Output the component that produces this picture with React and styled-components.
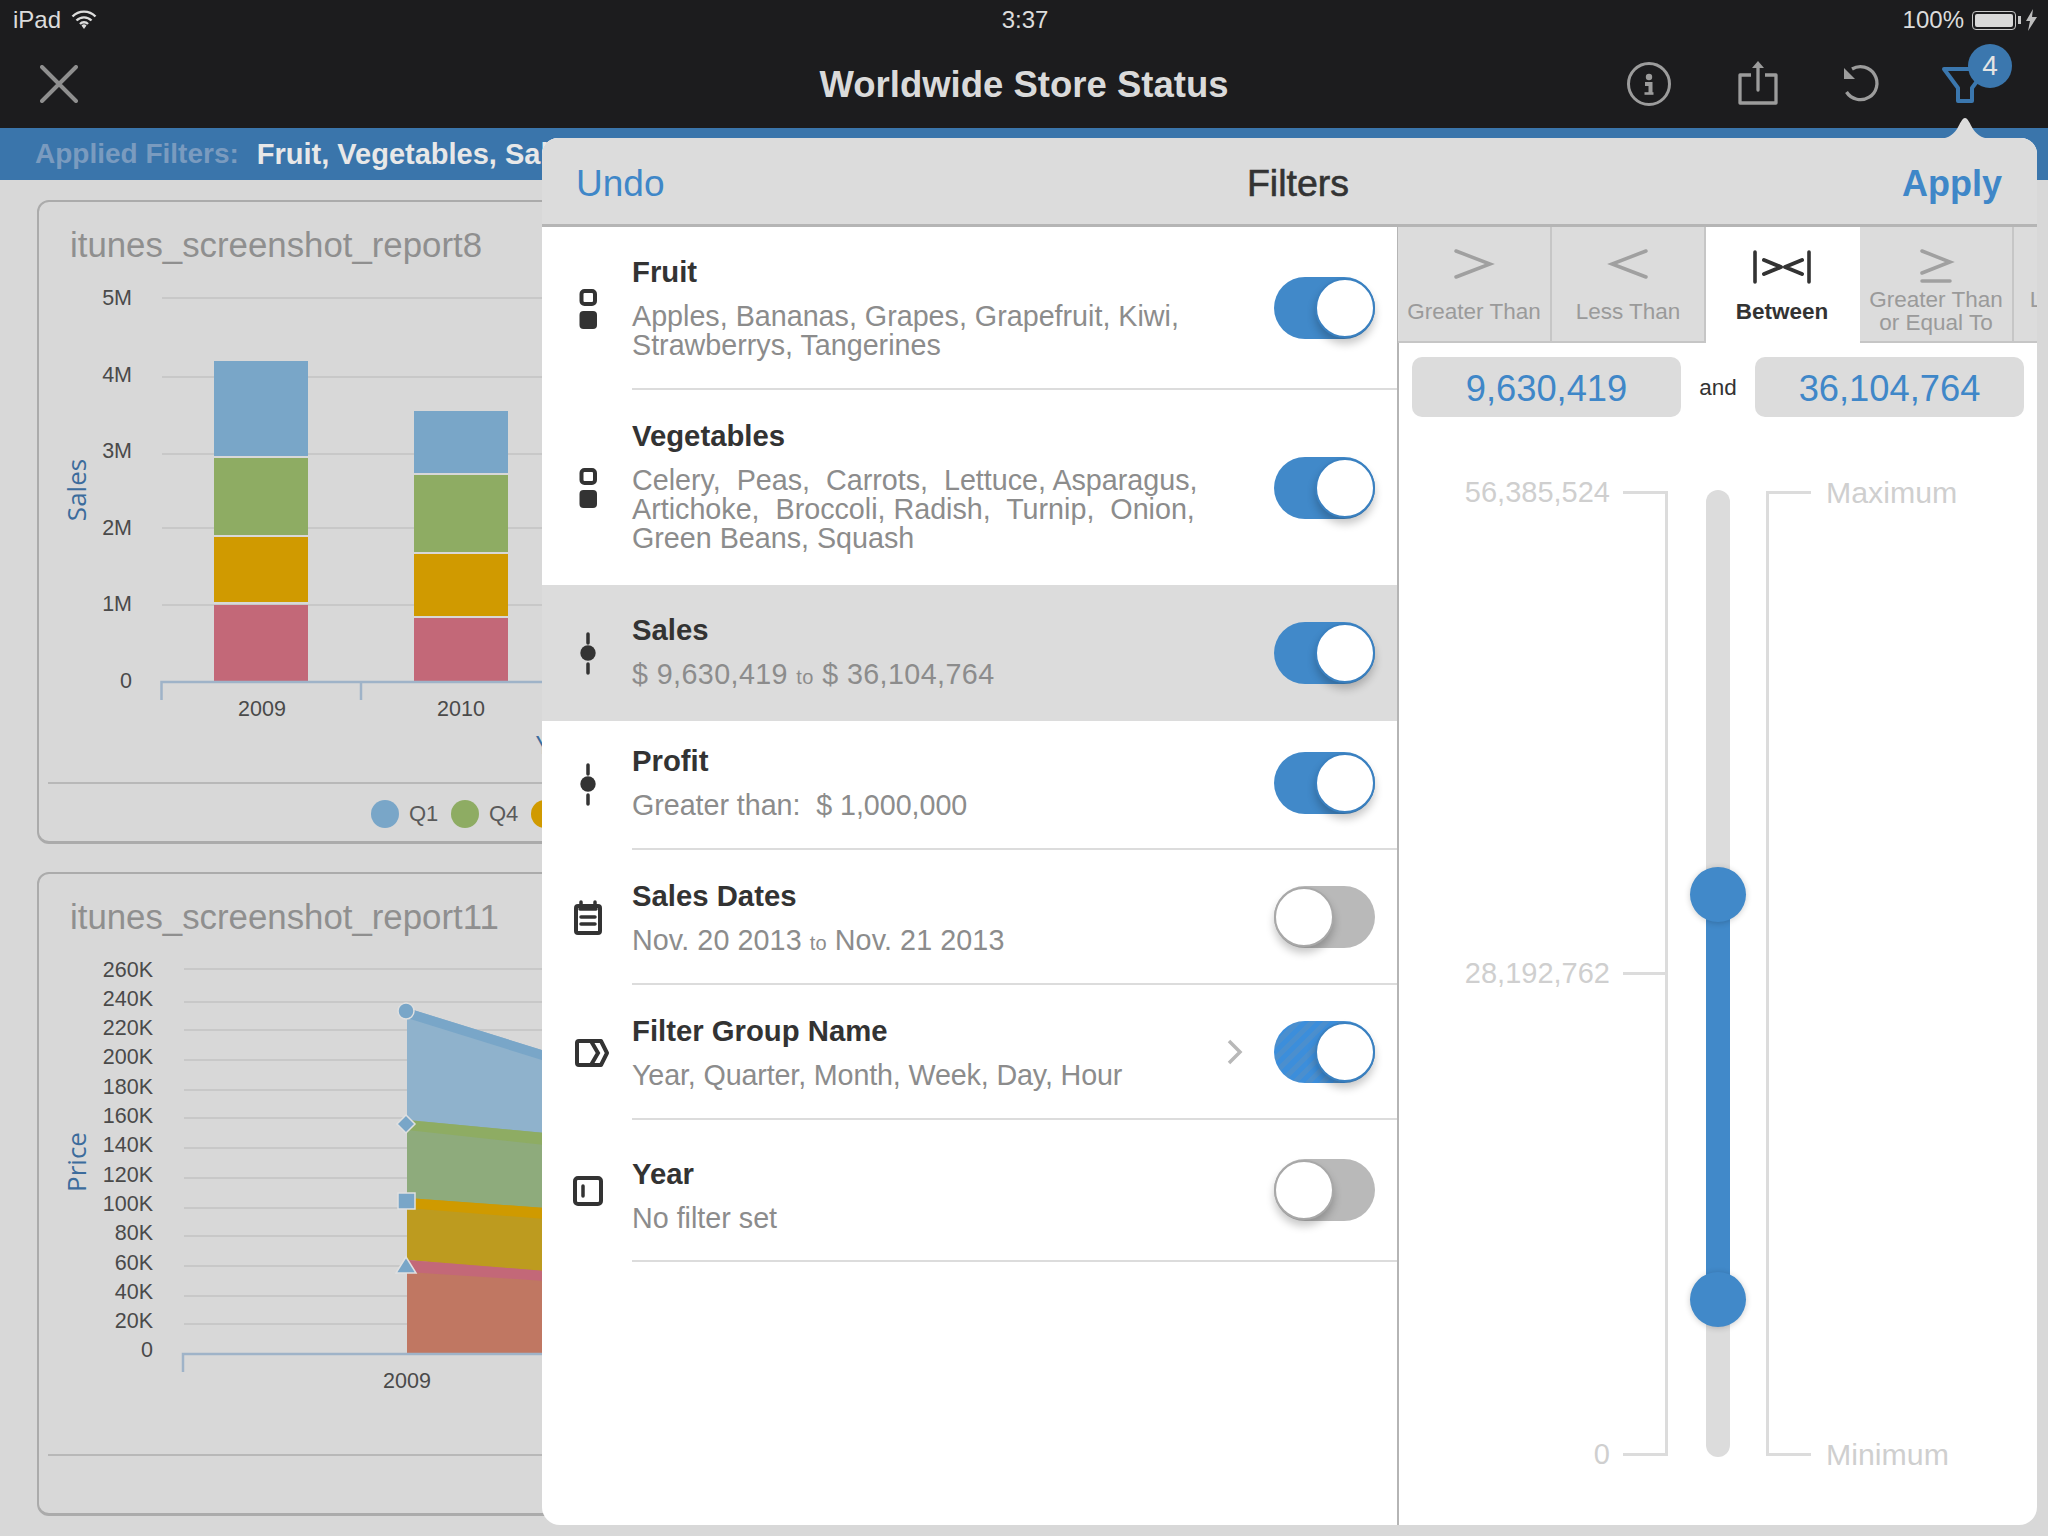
import React from 'react'
import styled, { createGlobalStyle } from 'styled-components'

const ICON_GREY = '#9c9c9c'
const INK = '#333333'

const GlobalStyle = createGlobalStyle`
  html, body { margin: 0; padding: 0; background: #d8d8d8; }
  * { box-sizing: border-box; }
  body { font-family: "Liberation Sans", Arial, sans-serif; }
`

const Screen = styled.div`
  position: relative;
  width: 2048px;
  height: 1536px;
  overflow: hidden;
  background: #d8d8d8;
`
const StatusBar = styled.div`
  display: grid;
  grid-template-columns: 1fr auto 1fr;
  align-items: center;
  height: 40px;
  padding: 0 11px 0 13px;
  background: #1c1c1e;
  color: #dcdcdc;
  font-size: 24px;
`
const StatusLeft = styled.div`
  display: flex;
  align-items: center;
  gap: 10px;
`
const StatusRight = styled.div`
  display: flex;
  align-items: center;
  justify-content: flex-end;
  gap: 8px;
`
const Battery = styled.div`
  position: relative;
  width: 44px;
  height: 19px;
  margin-right: 2px;
  padding: 2px;
  border: 1.5px solid #c8c8c8;
  border-radius: 4px;
  &::after {
    content: '';
    position: absolute;
    right: -6px;
    top: 4px;
    width: 3px;
    height: 8px;
    background: #c8c8c8;
  }
`
const BatteryFill = styled.div`
  height: 100%;
  background: #d8d8d8;
  border-radius: 2px;
`
const NavBar = styled.div`
  display: grid;
  grid-template-columns: 1fr auto 1fr;
  align-items: center;
  height: 88px;
  padding: 0 40px;
  background: #1c1c1e;
`
const NavTitle = styled.div`
  color: #dadada;
  font-size: 36.5px;
  font-weight: 700;
  padding-top: 2px;
`
const NavIcons = styled.div`
  display: flex;
  align-items: center;
  justify-content: flex-end;
  gap: 64px;
  padding-right: 17px;
  svg { display: block; }
`
const InfoIcon = styled.svg`
  margin-right: 3px;
`
const ShareIcon = styled.svg`
  margin-right: 1px;
`
const FunnelWrap = styled.div`
  position: relative;
  margin-left: -4px;
`
const Badge = styled.div`
  position: absolute;
  left: 27px;
  top: -18px;
  width: 44px;
  height: 44px;
  border-radius: 50%;
  background: #3b77ae;
  color: #e4e4e4;
  font-size: 28px;
  line-height: 44px;
  text-align: center;
`
const FilterBar = styled.div`
  display: flex;
  align-items: center;
  gap: 18px;
  height: 52px;
  padding-left: 35px;
  background: #3a75ab;
  font-size: 29px;
  font-weight: 700;
  white-space: nowrap;
`
const FilterLabel = styled.span`
  color: #7a9bbf;
  font-size: 28px;
`
const FilterValue = styled.span`
  color: #e8e8e8;
`
const Content = styled.div`
  display: flex;
  flex-direction: column;
  gap: 28px;
  padding: 20px 38px 0 37px;
`
const Card = styled.div`
  height: 644px;
  border: 2px solid #ababab;
  border-bottom-width: 3px;
  border-radius: 12px;
  overflow: hidden;
`
const CardTitle = styled.div`
  margin: 22px 0 0 31px;
  height: 42px;
  line-height: 42px;
  font-size: 34.8px;
  color: #8f8f8f;
`
const ChartSvg = styled.svg`
  display: block;
`
const AxisText = styled.text`
  font-family: "Liberation Sans", Arial, sans-serif;
  font-size: 21.5px;
  fill: #4a4a4a;
`
const AxisTitle = styled.text`
  font-family: "Open Sans", sans-serif;
  font-size: 26px;
  fill: #3c6c9c;
`
const CardRule = styled.div`
  height: 2px;
  margin-left: 9px;
  background: #b8b8b8;
`
const Legend = styled.div`
  display: flex;
  align-items: center;
  height: 57px;
  padding: 3px 0 0 332px;
`
const LegendDot = styled.div`
  width: 28px;
  height: 28px;
  margin-right: 10px;
  border-radius: 50%;
  background: ${p => p.$color};
`
const LegendText = styled.span`
  width: 42px;
  font-size: 22px;
  color: #5a5a5a;
`
const Popover = styled.div`
  position: absolute;
  left: 542px;
  top: 138px;
  width: 1495px;
  height: 1387px;
  display: flex;
  flex-direction: column;
  background: #fff;
  border-radius: 16px 16px 18px 18px;
`
const PopoverArrow = styled.svg`
  position: absolute;
  left: 1393px;
  top: -21px;
`
const PopoverHeader = styled.div`
  display: grid;
  grid-template-columns: 1fr auto 1fr;
  align-items: center;
  height: 89px;
  padding: 5px 35px 0 34px;
  background: #dcdcdc;
  border-bottom: 3px solid #b5b5b5;
  border-radius: 16px 16px 0 0;
`
const HeaderLink = styled.div`
  color: #3f87c8;
  font-size: ${p => (p.$bold ? 36 : 37)}px;
  font-weight: ${p => (p.$bold ? 700 : 400)};
  text-align: ${p => (p.$bold ? 'right' : 'left')};
`
const HeaderTitle = styled.div`
  padding-left: 18px;
  color: #333;
  font-size: 37.5px;
  -webkit-text-stroke: 0.6px #333;
`
const PopoverBody = styled.div`
  display: flex;
  flex: 1;
  min-height: 0;
`
const FilterList = styled.div`
  width: 857px;
  flex-shrink: 0;
  border-right: 2px solid #b5b5b5;
`
const Row = styled.div`
  display: flex;
  align-items: stretch;
  height: ${p => p.$height}px;
  background: ${p => (p.$selected ? '#dcdcdc' : 'transparent')};
`
const IconCell = styled.div`
  display: flex;
  align-items: center;
  justify-content: center;
  width: 90px;
  flex-shrink: 0;
  padding-left: 2px;
  padding-bottom: ${p => p.$nudge || 0}px;
  svg { display: block; }
`
const RowBody = styled.div`
  display: flex;
  align-items: center;
  flex: 1;
  padding-right: 22px;
  padding-bottom: ${p => p.$nudge || 0}px;
  border-bottom: ${p => (p.$divider ? '2px solid #dcdcdc' : 'none')};
`
const RowText = styled.div`
  flex: 1;
  min-width: 0;
  padding-top: ${p => (p.$shift > 0 ? p.$shift * 2 : 0)}px;
  padding-bottom: ${p => (p.$shift < 0 ? -p.$shift * 2 : 0)}px;
`
const RowTitle = styled.div`
  height: 36px;
  line-height: 36px;
  margin-bottom: 12px;
  color: ${INK};
  font-size: 29.3px;
  font-weight: 700;
`
const RowSub = styled.div`
  color: #8c8c8c;
  font-size: 28.7px;
  line-height: 29px;
  letter-spacing: ${p => p.$tracking || 0}px;
  white-space: pre-wrap;
`
const Small = styled.span`
  font-size: 20px;
`
const Chevron = styled.svg`
  margin-right: 30px;
`
const Toggle = styled.div`
  position: relative;
  width: 101px;
  height: 62px;
  flex-shrink: 0;
  border-radius: 31px;
  background: ${p => (p.$striped
    ? 'repeating-linear-gradient(-45deg, #3c8edb 0 5px, #4b8fce 5px 10px)'
    : p.$on ? '#4189c9' : '#b9b9b9')};
`
const Knob = styled.div`
  position: absolute;
  top: 1px;
  left: ${p => (p.$on ? '41px' : '0')};
  width: 60px;
  height: 60px;
  border-radius: 50%;
  background: #fff;
  border: 2px solid ${p => (p.$on ? '#3a80c0' : '#a8a8a8')};
  box-shadow: 0 6px 8px rgba(0, 0, 0, 0.22);
`
const Editor = styled.div`
  flex: 1;
  min-width: 0;
  display: flex;
  flex-direction: column;
`
const Tabs = styled.div`
  display: flex;
  height: 116px;
  flex-shrink: 0;
  margin-left: -1px;
  overflow: hidden;
`
const Tab = styled.div`
  width: 154px;
  flex-shrink: 0;
  display: flex;
  flex-direction: column;
  align-items: center;
  gap: 4px;
  padding-top: 19px;
  padding-right: ${p => (p.$last ? '16px' : '0')};
  background: ${p => (p.$active ? '#fff' : '#dcdcdc')};
  border-right: 2px solid ${p => (p.$active ? '#fff' : '#c6c6c6')};
  border-bottom: 2px solid ${p => (p.$active ? '#fff' : '#c6c6c6')};
`
const TabLabel = styled.div`
  display: flex;
  align-items: center;
  height: 46px;
  color: ${p => (p.$active ? INK : '#9a9a9a')};
  font-size: 22.5px;
  font-weight: ${p => (p.$active ? 700 : 400)};
  line-height: 23px;
  text-align: center;
  white-space: pre-line;
`
const Inputs = styled.div`
  display: grid;
  grid-template-columns: 269px 74px 269px;
  align-items: center;
  padding: 14px 0 0 13px;
`
const ValueBox = styled.div`
  height: 60px;
  border-radius: 10px;
  background: #dcdcdc;
  color: #3f87c8;
  font-size: 36.3px;
  line-height: 63px;
  text-align: center;
`
const AndLabel = styled.div`
  padding-top: 2px;
  color: ${INK};
  font-size: 22.5px;
  text-align: center;
`
const Slider = styled.div`
  display: flex;
  height: 967px;
  margin-top: 73px;
`
const LeftScale = styled.div`
  display: flex;
  flex-direction: column;
  justify-content: space-between;
  width: 269px;
  height: 965px;
  margin: 1px 38px 0 0;
  border-right: 3px solid #dcdcdc;
`
const ScaleRow = styled.div`
  display: flex;
  align-items: center;
  justify-content: flex-end;
  height: 3px;
`
const ScaleText = styled.span`
  margin-right: 13px;
  color: #cfcfcf;
  font-size: 29px;
`
const Tick = styled.div`
  width: 42px;
  height: 3px;
  flex-shrink: 0;
  background: #dcdcdc;
`
const Track = styled.div`
  position: relative;
  width: 24px;
  flex-shrink: 0;
  border-radius: 12px;
  background: #dcdcdc;
`
const TrackRange = styled.div`
  position: absolute;
  left: 0;
  top: ${p => p.$top}px;
  width: 24px;
  height: ${p => p.$height}px;
  background: #4189c9;
`
const Thumb = styled.div`
  position: absolute;
  left: -16px;
  top: ${p => p.$top}px;
  width: 56px;
  height: 55px;
  border-radius: 50%;
  background: #4189c9;
  box-shadow: 0 1px 6px rgba(0, 0, 0, 0.2);
`
const RightScale = styled.div`
  display: flex;
  flex-direction: column;
  justify-content: space-between;
  height: 965px;
  margin: 1px 0 0 36px;
  border-left: 3px solid #dcdcdc;
`
const RightRow = styled(ScaleRow)`
  justify-content: flex-start;
`
const RightText = styled.span`
  margin-left: 15px;
  color: #cfcfcf;
  font-size: 30.3px;
`

const filters = [
  { name: 'Fruit', icon: 'list', height: 163, divider: true, shift: -1, lines: 'Apples, Bananas, Grapes, Grapefruit, Kiwi,\nStrawberrys, Tangerines', on: true },
  { name: 'Vegetables', icon: 'list', height: 195, shift: -2, lines: 'Celery,  Peas,  Carrots,  Lettuce, Asparagus,\nArtichoke,  Broccoli, Radish,  Turnip,  Onion,\nGreen Beans, Squash', on: true },
  { name: 'Sales', icon: 'range', height: 136, selected: true, shift: -1, tracking: 0.4, lines: <>$ 9,630,419 <Small>to</Small> $ 36,104,764</>, on: true },
  { name: 'Profit', icon: 'range', height: 129, divider: true, nudge: 4, shift: -1, tracking: -0.05, lines: 'Greater than:  $ 1,000,000', on: true },
  { name: 'Sales Dates', icon: 'calendar', height: 135, divider: true, shift: 1, tracking: 0.1, lines: <>Nov. 20 2013 <Small>to</Small> Nov. 21 2013</> },
  { name: 'Filter Group Name', icon: 'group', height: 135, divider: true, chevron: true, striped: true, tracking: -0.14, lines: 'Year, Quarter, Month, Week, Day, Hour', on: true },
  { name: 'Year', icon: 'year', height: 142, divider: true, shift: 4.5, lines: 'No filter set' },
]

const tabs = [
  { label: 'Greater Than', icon: 'gt' },
  { label: 'Less Than', icon: 'lt' },
  { label: 'Between', icon: 'between', active: true },
  { label: 'Greater Than\nor Equal To', icon: 'gte' },
  { label: 'Less Than\nor Equal', icon: 'lte', last: true },
]

function RowIcon({ kind }) {
  return (
    <svg width="44" height="44" viewBox="0 0 44 44" fill="none" stroke={INK}>
      {kind === 'list' && <>
        <rect x="15.5" y="4" width="13.5" height="13" rx="3" strokeWidth="4" />
        <rect x="13.5" y="24" width="17.5" height="18" rx="4" fill={INK} stroke="none" />
      </>}
      {kind === 'range' && <>
        <path d="M22 3v9M22 33v9" strokeWidth="3.5" strokeLinecap="round" />
        <circle cx="22" cy="22" r="7.7" fill={INK} stroke="none" />
      </>}
      {kind === 'calendar' && <>
        <rect x="10" y="10" width="24" height="27" rx="2" strokeWidth="4" />
        <path d="M15 6v5M29 6v5M14 13h16" strokeWidth="3.5" strokeLinecap="round" />
        <path d="M15 21h14M15 28h14" strokeWidth="3.5" strokeLinecap="round" />
      </>}
      {kind === 'group' && <>
        <path d="M13 10h22l6 12-6 12H13q-2 0-2-2V12q0-2 2-2z" strokeWidth="4" strokeLinejoin="round" />
        <path d="M25 10l7 12-7 12" strokeWidth="4" />
      </>}
      {kind === 'year' && <>
        <rect x="9" y="9" width="26" height="26" rx="3" strokeWidth="4" />
        <path d="M17 17v10" strokeWidth="3.5" strokeLinecap="round" />
      </>}
    </svg>
  )
}

function TabIcon({ kind, color }) {
  return (
    <svg width="64" height="38" viewBox="0 0 64 38" fill="none" stroke={color} strokeWidth="3.5" strokeLinecap="round" strokeLinejoin="miter">
      {kind === 'gt' && <path d="M14 5l34 13L14 31" />}
      {kind === 'lt' && <path d="M50 5L16 18l34 13" />}
      {kind === 'between' && <>
        <path d="M5 6v30M59 6v30" strokeWidth="3.6" />
        <path d="M14 14l17 7-17 7M52 14l-17 7 17 7" strokeWidth="4" strokeLinejoin="round" />
      </>}
      {kind === 'gte' && <path d="M18 5l28 11-28 11M18 35h28" />}
      {kind === 'lte' && <path d="M46 5L18 16l28 11M18 35h28" />}
    </svg>
  )
}

function StackedBar({ x, parts }) {
  return parts.map(p => <rect key={p.y} x={x} y={p.y} width="94" height={p.h} fill={p.c} />)
}

function SalesChart() {
  const grid = [[298, 304.5, '5M'], [377, 381.5, '4M'], [454, 457.5, '3M'], [528, 534.5, '2M'], [605, 610.5, '1M']]
  return (
    <ChartSvg viewBox="39 266 520 516" width="520" height="516">
      {grid.map(([y, base, t]) => (
        <g key={t}>
          <line x1="162" x2="560" y1={y} y2={y} stroke="#c8c8c8" strokeWidth="2" />
          <AxisText x="132" y={base} textAnchor="end">{t}</AxisText>
        </g>
      ))}
      <AxisText x="132" y="687.5" textAnchor="end">0</AxisText>
      <StackedBar x="214" parts={[
        { y: 361, h: 95, c: '#79a6c8' }, { y: 458, h: 77, c: '#8eac63' },
        { y: 537, h: 65, c: '#d09a00' }, { y: 605, h: 76, c: '#c36878' },
      ]} />
      <StackedBar x="414" parts={[
        { y: 411, h: 62, c: '#79a6c8' }, { y: 475, h: 77, c: '#8eac63' },
        { y: 554, h: 62, c: '#d09a00' }, { y: 618, h: 63, c: '#c36878' },
      ]} />
      <path d="M161.5 700V682H560M361 682v18" fill="none" stroke="#9fb3c8" strokeWidth="2.5" />
      <AxisText x="262" y="716" textAnchor="middle">2009</AxisText>
      <AxisText x="461" y="716" textAnchor="middle">2010</AxisText>
      <AxisTitle x="536" y="754">Year</AxisTitle>
      <AxisTitle transform="translate(86 490) rotate(-90)" textAnchor="middle">Sales</AxisTitle>
    </ChartSvg>
  )
}

function PriceChart() {
  const labels = ['260K', '240K', '220K', '200K', '180K', '160K', '140K', '120K', '100K', '80K', '60K', '40K', '20K', '0']
  const ys = [968, 1001, 1029, 1059, 1089, 1117, 1147, 1177, 1207, 1235, 1265, 1295, 1323]
  return (
    <ChartSvg viewBox="39 937 520 516" width="520" height="516">
      {ys.map(y => <line key={y} x1="184" x2="560" y1={y} y2={y} stroke="#c8c8c8" strokeWidth="2" />)}
      {labels.map((t, i) => <AxisText key={t} x="153" y={975.5 + i * 29.3} textAnchor="end">{t}</AxisText>)}
      <polygon points="407,1007 545,1050 545,1135 407,1119" fill="#8fb2cc" />
      <polygon points="407,1007 545,1050 545,1060 407,1017" fill="#79a6c8" />
      <polygon points="407,1119 545,1132 545,1210 407,1197" fill="#8eab7c" />
      <polygon points="407,1119 545,1132 545,1144 407,1129" fill="#8eac63" />
      <polygon points="407,1197 545,1207 545,1272 407,1259" fill="#bd9b1f" />
      <polygon points="407,1197 545,1207 545,1218 407,1207" fill="#cf9a00" />
      <polygon points="407,1259 545,1270 545,1353 407,1353" fill="#c07762" />
      <polygon points="407,1259 545,1270 545,1280 407,1271" fill="#c36878" />
      <g fill="#79a6c8" stroke="#e0e0e0" strokeWidth="1.5">
        <circle cx="406" cy="1010" r="8" />
        <polygon points="406,1114 415,1123 406,1132 397,1123" />
        <rect x="398" y="1192" width="17" height="16" />
        <polygon points="406,1256 416,1272 396,1272" />
      </g>
      <path d="M183 1371v-18H560" fill="none" stroke="#9fb3c8" strokeWidth="2.5" />
      <AxisText x="407" y="1387" textAnchor="middle">2009</AxisText>
      <AxisTitle transform="translate(86 1161) rotate(-90)" textAnchor="middle">Price</AxisTitle>
    </ChartSvg>
  )
}

export default function App() {
  return (
    <Screen>
      <GlobalStyle />
      <StatusBar>
        <StatusLeft>
          iPad
          <svg width="26" height="20" viewBox="0 0 26 20" fill="none" stroke="#dcdcdc" strokeWidth="2.4">
            <path d="M1.5 6.5a16 16 0 0 1 23 0M5.5 10.5a10.5 10.5 0 0 1 15 0M9 14a5.5 5.5 0 0 1 8 0" />
            <path d="M10.5 15.5L13 19l2.5-3.5a3.5 3.5 0 0 0-5 0z" fill="#dcdcdc" stroke="none" />
          </svg>
        </StatusLeft>
        <span>3:37</span>
        <StatusRight>
          100%
          <Battery><BatteryFill /></Battery>
          <svg width="11" height="22" viewBox="0 0 11 22" fill="#bdbdbd">
            <path d="M7 0L0 12h4l-2 10 9-14H6z" />
          </svg>
        </StatusRight>
      </StatusBar>

      <NavBar>
        <svg width="38" height="38" viewBox="0 0 38 38" fill="none" stroke="#8f8f8f" strokeWidth="4" strokeLinecap="round">
          <path d="M2 2l34 34M36 2L2 36" />
        </svg>
        <NavTitle>Worldwide Store Status</NavTitle>
        <NavIcons>
          <InfoIcon width="44" height="44" viewBox="0 0 44 44" fill="none" stroke={ICON_GREY} strokeWidth="3">
            <circle cx="22" cy="22" r="20.5" />
            <circle cx="22" cy="15" r="3.2" fill={ICON_GREY} stroke="none" />
            <path d="M18 22h5.5v9" strokeWidth="4" />
            <path d="M17.5 31.5h9" strokeWidth="2.6" />
          </InfoIcon>
          <ShareIcon width="40" height="48" viewBox="0 0 40 48" fill="none" stroke={ICON_GREY} strokeWidth="3.3" strokeLinejoin="round">
            <path d="M13 15H2v28h36V15H27" />
            <path d="M20 6v24" strokeLinecap="round" />
            <path d="M14 8l6-7 6 7z" fill={ICON_GREY} stroke="none" />
          </ShareIcon>
          <svg width="38" height="44" viewBox="0 0 38 44" fill="none" stroke={ICON_GREY} strokeWidth="3.3">
            <path d="M9 7A16.5 16.5 0 1 1 3.5 30" />
            <path d="M1 6v11l11 0z" fill={ICON_GREY} stroke="none" />
          </svg>
          <FunnelWrap>
            <svg width="50" height="44" viewBox="0 0 50 44" fill="none" stroke="#3b77ae" strokeWidth="4" strokeLinejoin="round">
              <path d="M3 7l14 19v13h14V26L45 7z" />
            </svg>
            <Badge>4</Badge>
          </FunnelWrap>
        </NavIcons>
      </NavBar>

      <FilterBar>
        <FilterLabel>Applied Filters:</FilterLabel>
        <FilterValue>Fruit, Vegetables, Sales, Profit</FilterValue>
      </FilterBar>

      <Content>
        <Card>
          <CardTitle>itunes_screenshot_report8</CardTitle>
          <SalesChart />
          <CardRule />
          <Legend>
            <LegendDot $color="#79a6c8" /><LegendText>Q1</LegendText>
            <LegendDot $color="#8eac63" /><LegendText>Q4</LegendText>
            <LegendDot $color="#d09a00" /><LegendText>Q2</LegendText>
          </Legend>
        </Card>
        <Card>
          <CardTitle>itunes_screenshot_report11</CardTitle>
          <PriceChart />
          <CardRule />
          <Legend />
        </Card>
      </Content>

      <Popover>
        <PopoverArrow width="60" height="22" viewBox="0 0 60 22">
          <path d="M0 22c12 0 17-3 22-10 3-5 5-11 8-11s5 6 8 11c5 7 10 10 22 10z" fill="#dcdcdc" />
        </PopoverArrow>
        <PopoverHeader>
          <HeaderLink>Undo</HeaderLink>
          <HeaderTitle>Filters</HeaderTitle>
          <HeaderLink $bold>Apply</HeaderLink>
        </PopoverHeader>
        <PopoverBody>
          <FilterList>
            {filters.map(f => (
              <Row key={f.name} $height={f.height} $selected={f.selected}>
                <IconCell $nudge={f.nudge}><RowIcon kind={f.icon} /></IconCell>
                <RowBody $divider={f.divider} $nudge={f.nudge}>
                  <RowText $shift={f.shift || 0}>
                    <RowTitle>{f.name}</RowTitle>
                    <RowSub $tracking={f.tracking}>{f.lines}</RowSub>
                  </RowText>
                  {f.chevron && (
                    <Chevron width="18" height="26" viewBox="0 0 18 26" fill="none" stroke="#b8b8b8" strokeWidth="3.5">
                      <path d="M3 2l11 11L3 24" />
                    </Chevron>
                  )}
                  <Toggle $on={f.on} $striped={f.striped}><Knob $on={f.on} /></Toggle>
                </RowBody>
              </Row>
            ))}
          </FilterList>

          <Editor>
            <Tabs>
              {tabs.map(t => (
                <Tab key={t.label} $active={t.active} $last={t.last}>
                  <TabIcon kind={t.icon} color={t.active ? INK : '#a0a0a0'} />
                  <TabLabel $active={t.active}>{t.label}</TabLabel>
                </Tab>
              ))}
            </Tabs>
            <Inputs>
              <ValueBox>9,630,419</ValueBox>
              <AndLabel>and</AndLabel>
              <ValueBox>36,104,764</ValueBox>
            </Inputs>
            <Slider>
              <LeftScale>
                <ScaleRow><ScaleText>56,385,524</ScaleText><Tick /></ScaleRow>
                <ScaleRow><ScaleText>28,192,762</ScaleText><Tick /></ScaleRow>
                <ScaleRow><ScaleText>0</ScaleText><Tick /></ScaleRow>
              </LeftScale>
              <Track>
                <TrackRange $top={404} $height={405} />
                <Thumb $top={377} />
                <Thumb $top={782} />
              </Track>
              <RightScale>
                <RightRow><Tick /><RightText>Maximum</RightText></RightRow>
                <RightRow><Tick /><RightText>Minimum</RightText></RightRow>
              </RightScale>
            </Slider>
          </Editor>
        </PopoverBody>
      </Popover>
    </Screen>
  )
}
